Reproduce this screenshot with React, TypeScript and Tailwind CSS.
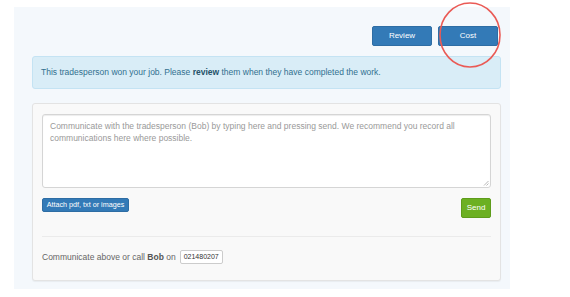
import React from "react";

export default function App() {
  return (
    <div className="relative w-[570px] h-[297px] bg-white overflow-hidden" style={{ fontFamily: '"Liberation Sans", Arial, sans-serif' }}>
      <div className="ml-[14px] mt-[7px] w-[496px] h-[282px] bg-[#f4f8fc] pt-[19px]">
        <div className="flex justify-end gap-[6px] pr-[12px]">
          <button className="w-[60px] h-[20px] bg-[#337ab7] border border-[#2e6da4] rounded-[2px] text-white text-[8px] leading-none">Review</button>
          <button className="w-[60px] h-[20px] bg-[#337ab7] border border-[#2e6da4] rounded-[2px] text-white text-[8px] leading-none">Cost</button>
        </div>
        <div className="ml-[18px] mr-[9px] mt-[10px] h-[33px] bg-[#d9edf7] border border-[#c4e3f3] rounded-[3px] flex items-center pl-[8px] text-[8.5px] text-[#31708f]">
          <span>This tradesperson won your job. Please <b className="text-[#245269]">review</b> them when they have completed the work.</span>
        </div>
        <div className="ml-[18px] mr-[9px] mt-[14px] h-[178px] bg-[#f9f9f9] border border-[#e3e3e3] rounded-[3px] shadow-[0_1px_1px_rgba(0,0,0,0.05)] px-[9px] pt-[10px]">
          <div className="relative h-[74px] bg-white border border-[#d5d5d5] rounded-[3px] px-[7px] pt-[5px] text-[8.5px] leading-[12px] text-[#999] shadow-[inset_0_1px_1px_rgba(0,0,0,0.075)]">
            Communicate with the tradesperson (Bob) by typing here and pressing send. We recommend you record all communications here where possible.
            <svg className="absolute right-[1px] bottom-[1px]" width="6" height="6" viewBox="0 0 6 6">
              <path d="M5.5 1 L1 5.5 M5.5 3.5 L3.5 5.5" stroke="#999" strokeWidth="0.7" />
            </svg>
          </div>
          <div className="flex justify-between items-start mt-[10px]">
            <button className="w-[87px] h-[14px] bg-[#337ab7] border border-[#2e6da4] rounded-[2px] text-white text-[7.2px] leading-none">Attach pdf, txt or images</button>
            <button className="w-[30px] h-[20px] bg-[#6cb022] border border-[#5e9c1b] rounded-[2px] text-white text-[8px] leading-none">Send</button>
          </div>
          <div className="mt-[18px] border-t border-[#ebebeb]" />
          <div className="mt-[13px] flex items-center text-[8.5px] text-[#666]">
            <span>Communicate above or call <b className="text-[#555]">Bob</b> on</span>
            <span className="ml-[4px] w-[43px] h-[14px] bg-white border border-[#ccc] rounded-[2px] flex items-center justify-center text-[7px] text-[#333]">021480207</span>
          </div>
        </div>
      </div>
      <svg className="absolute left-[438px] top-[2px]" width="66" height="68" viewBox="0 0 66 68">
        <ellipse cx="32" cy="33" rx="30" ry="32" fill="none" stroke="#ea5a55" strokeWidth="1.6" />
      </svg>
    </div>
  );
}
